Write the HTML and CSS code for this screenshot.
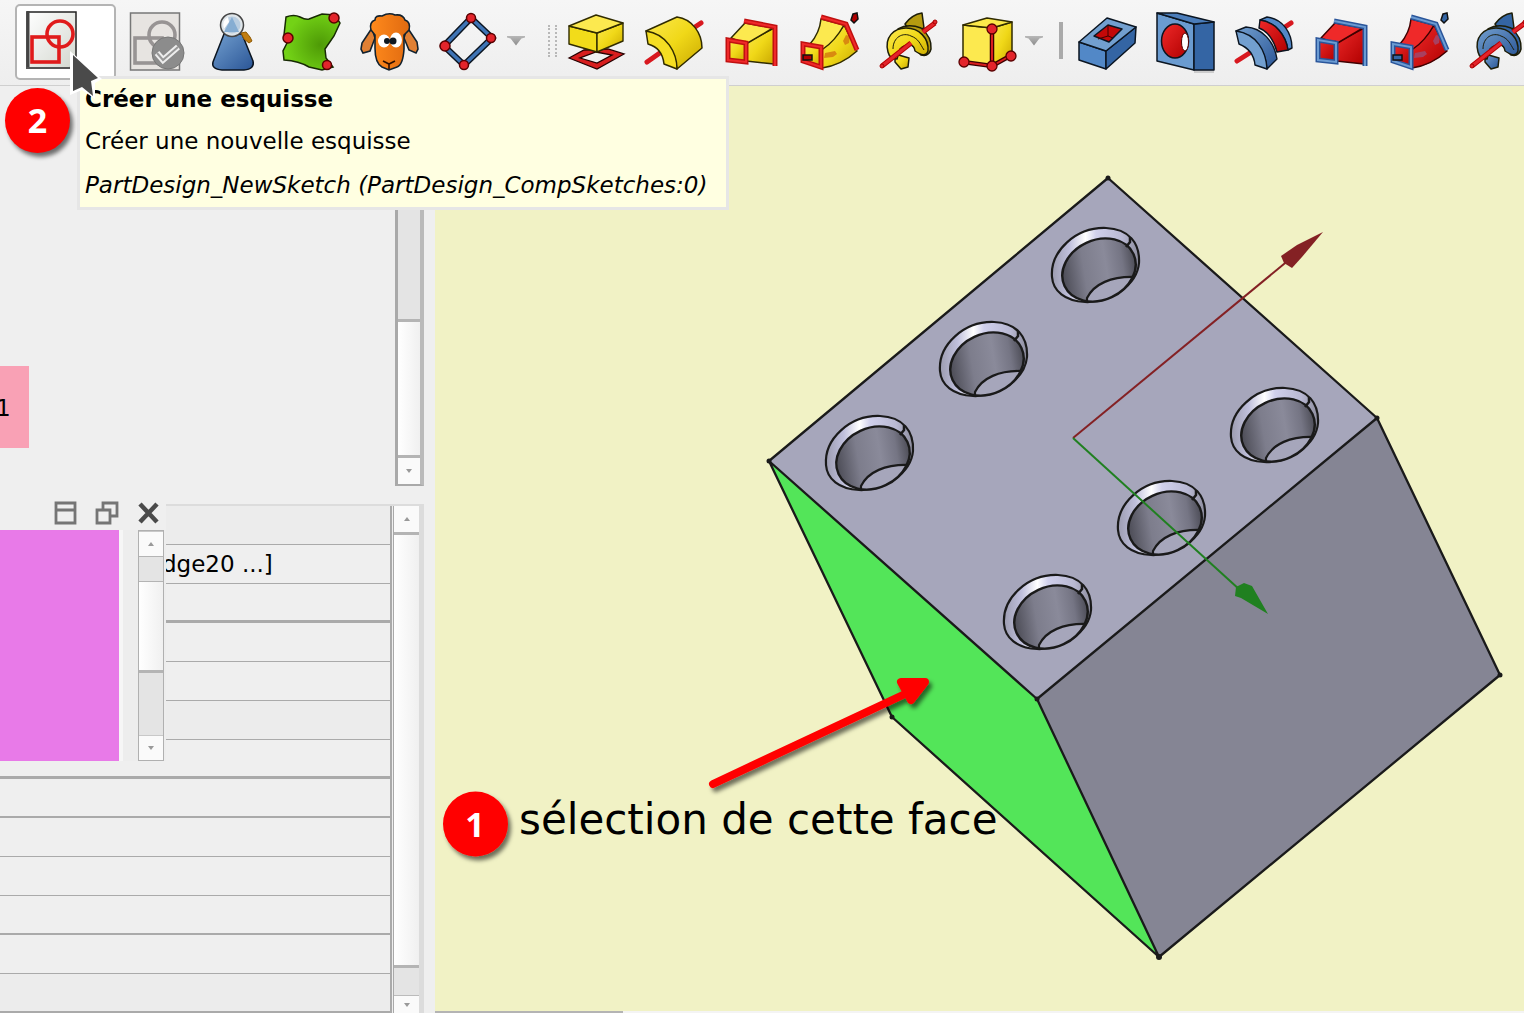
FILE: index.html
```html
<!DOCTYPE html>
<html lang="fr">
<head>
<meta charset="utf-8">
<title>PartDesign</title>
<link rel="stylesheet" href="styles.css">
</head>
<body>
<svg class="defs" aria-hidden="true">
  <defs>
    <linearGradient id="yellow" x1="0" y1="0" x2="1" y2="1"><stop offset="0" stop-color="#fce94f"/><stop offset=".5" stop-color="#f0d818"/><stop offset="1" stop-color="#c9a800"/></linearGradient>
    <linearGradient id="blue" x1="0" y1="0" x2="1" y2="1"><stop offset="0" stop-color="#729fcf"/><stop offset="1" stop-color="#2a5596"/></linearGradient>
    <linearGradient id="red" x1="0" y1="0" x2="1" y2="1"><stop offset="0" stop-color="#ef2929"/><stop offset="1" stop-color="#b00000"/></linearGradient>
    <linearGradient id="paper" x1="0" y1="0" x2="1" y2="1"><stop offset="0" stop-color="#fff"/><stop offset="1" stop-color="#d3d7cf"/></linearGradient>
    <radialGradient id="green" cx=".65" cy=".55" r=".6"><stop offset="0" stop-color="#4e9a06"/><stop offset="1" stop-color="#73d216"/></radialGradient>
    <linearGradient id="orange"><stop offset="0" stop-color="#ff8a1c"/><stop offset="1" stop-color="#e06a10"/></linearGradient>
    <symbol id="loft" viewBox="0 0 60 60">
      <path class="side" d="M24 32 52 17V53L24 50Z"/>
      <path class="top" d="M9 27 23 12 51 17 24 33Z"/>
      <path class="frame-out" d="M22 10 53 16V55"/><path class="frame-in" d="M22 10 53 16V55"/>
      <rect class="side flat" x="6" y="29" width="18" height="21"/>
      <path class="frame-out" d="M6 29 24 32V51L6 49Z"/><path class="frame-in" d="M6 29 24 32V51L6 49Z"/>
    </symbol>
    <symbol id="pipe" viewBox="0 0 60 60">
      <path class="side" d="M22 37C32 30 39 22 44 14L57 40C46 50 36 55 22 57Z"/>
      <path class="blob" d="M43 30l3-6 4 1-1 7-4 2ZM25 42l10-2 2 3-4 3-9 1Z"/>
      <path class="top" d="M10 33C17 25 20 18 21 8L44 14C39 23 32 32 23 38Z"/>
      <path class="frame-out" d="M21 6 46 13 57 39"/><path class="frame-in" d="M21 6 46 13 57 39"/>
      <path class="side flat" d="M3 34 21 37V56L3 50Z"/>
      <path class="frame-out" d="M3 33 21 36V56L3 50Z"/><path class="frame-in" d="M3 33 21 36V56L3 50Z"/>
      <path class="dot" d="M3 44H12V49H3ZM53 3l4-1 1 6-4 4-3-3Z"/>
    </symbol>
    <symbol id="helix" viewBox="0 0 60 60">
      <path class="body dark" d="M27 13C32 6 38 3 44 2L46 17 33 22Z"/>
      <path class="body" d="M17 43 31 47 30 56 23 58 17 51Z"/>
      <path class="body dark" d="M20 18Q30 12 43 17 54 26 53 38 51 46 43 44Z"/>
      <path class="body" d="M10 41C6 26 16 17 28 17C41 17 51 27 50 40C48 46 43 44 37 40C36 32 28 32 22 38L19 48C13 48 11 45 10 41Z"/>
      <path class="line" d="M15 38C15 26 25 21 33 25C41 28 42 33 46 39"/>
      <path class="axis-out" d="M4 55 33 32M45 21 57 12"/><path class="axis" d="M4 55 33 32M45 21 57 12"/>
      <circle class="axis-dot" cx="4" cy="55" r="2"/><circle class="axis-dot" cx="57" cy="11" r="2"/>
    </symbol>
  </defs>
</svg>

<header class="toolbar" role="toolbar">
  <button class="tool tool-active" aria-label="Créer une esquisse">
    <svg class="icon" viewBox="0 0 60 60"><rect x="5" y="2" width="49" height="56" fill="url(#paper)" stroke="#222" stroke-width="1.5"/><path d="M6 1V59" stroke="#444" stroke-width="3"/><path d="M4 58H48L54 52" stroke="#555" stroke-width="2" fill="none"/><g fill="none" stroke="#e01b1b" stroke-width="3.6"><rect x="10" y="27" width="27" height="25"/><circle cx="38" cy="24" r="13"/></g></svg>
  </button>
  <div class="group">
    <button class="tool" aria-label="Valider l'esquisse" disabled><svg class="icon" viewBox="0 0 60 60"><rect x="4.500" y="2" width="49" height="57" fill="#e7e4e1" stroke="#777" stroke-width="1.5"/><g fill="none" stroke="#989494" stroke-width="3.600"><rect x="9" y="27" width="27" height="25"/><circle cx="36" cy="24" r="13"/></g><circle cx="42" cy="42" r="16" fill="#8c8c8c" stroke="#777"/><path d="m31 42 6 7L52 36" fill="none" stroke="#eee" stroke-width="6"/><path d="m31 42 6 7L52 36" fill="none" stroke="#999" stroke-width="2"/></svg></button>
    <button class="tool" aria-label="Vérifier la géométrie"><svg class="icon" viewBox="0 0 60 60"><path d="M20 23 9 51Q7 58 18 59H40Q51 58 49 50L38 23Z" fill="url(#blue)" stroke="#0b1521" stroke-width="1.500"/><path d="m37 22 3 6 5 4 3-2-2-4-4-5Z" fill="#c17d11" stroke="#8f5902"/><circle cx="28" cy="14" r="11.500" fill="#dfe5e9" stroke="#444" stroke-width="1.500"/><circle cx="28" cy="14" r="8.500" fill="#b9cde0"/><path d="M28 6 35 21H20Z" fill="#86add2"/><path d="M20 18Q17 10 24 6L25 11Z" fill="#fff"/></svg></button>
    <button class="tool" aria-label="SubShapeBinder"><svg class="icon" viewBox="0 0 60 60"><path d="M4 6Q12 3 18 6T27 8L40 3 53 4 58 12 52 25 43 38 44 47 51 56 40 59 27 56Q17 50 2 49L1 40 5 32 2 24Z" fill="url(#green)" stroke="#172a04" stroke-width="1.500"/><g fill="#e3242b" stroke="#5a0000" stroke-width="1.500"><circle cx="52" cy="7" r="5"/><circle cx="6" cy="27" r="5"/><circle cx="45" cy="54" r="4.500"/></g></svg></button>
    <button class="tool" aria-label="Clone"><svg class="icon" viewBox="0 0 60 60"><path d="M12 17 2 32 1 38 3 42 10 40 15 27ZM47 16 57 31 58 38 56 42 49 39 44 27Z" fill="#e08034" stroke="#12222f" stroke-width="1.600"/><path d="M11 19Q9 11 15 9 15 4 22 5 29 1 35 4 43 3 45 9 51 11 49 19L44 24V38Q43 54 37 56L29 59 22 56Q15 52 15 37V24Z" fill="url(#orange)" stroke="#12222f" stroke-width="1.600"/><ellipse cx="24" cy="30" rx="6" ry="6.500" fill="#fff"/><ellipse cx="36" cy="29" rx="6" ry="7.500" fill="#fff"/><ellipse cx="27" cy="30" rx="3" ry="3" fill="#101820"/><ellipse cx="33" cy="30" rx="3.500" ry="3.500" fill="#101820"/><path d="m23 50 6 3 6-3M29 53v5" fill="none" stroke="#301000" stroke-width="1.600"/></svg></button>
    <button class="tool" aria-label="Polygone"><svg class="icon" viewBox="0 0 60 60"><path d="M33 7 54 27 26 54 6 35Z" fill="none" stroke="#0b1521" stroke-width="6.500"/><path d="M33 7 54 27 26 54 6 35Z" fill="none" stroke="#3f74b5" stroke-width="3.600"/><g fill="#e3242b" stroke="#5a0000" stroke-width="1.500"><circle cx="33" cy="7" r="4.500"/><circle cx="53" cy="27" r="4.500"/><circle cx="7" cy="35" r="5"/><circle cx="26" cy="54" r="4.500"/></g></svg></button>
  </div>
  <button class="drop" aria-label="Plus d'outils"></button>
  <span class="handle"></span>
  <div class="group">
    <button class="tool" aria-label="Protrusion"><svg class="icon" viewBox="0 0 60 60"><path d="M3 47 18 39 42 38 58 43 31 58Z M14 47 31 52 46 44 30 41Z" fill="#d81e1e" fill-rule="evenodd" stroke="#280000" stroke-width="1.300"/><g stroke="#302b00" stroke-width="1.400" stroke-linejoin="round"><path d="M3 15 31 22V41L3 33Z" fill="#f2dc1a"/><path d="M31 22 57 12V30L31 41Z" fill="url(#yellow)"/><path d="M3 15 30 4 57 12 31 22Z" fill="#fce94f"/></g></svg></button>
    <button class="tool" aria-label="Révolution"><svg class="icon" viewBox="0 0 60 60"><path d="M3 51 30 32M45 20 57 12" stroke="#d8181f" stroke-width="5" stroke-linecap="round"/><g stroke="#302b00" stroke-width="1.500" stroke-linejoin="round"><path d="M2 20 33 6C48 8 58 22 58 37L33 58C31 42 23 27 2 20Z" fill="url(#yellow)"/><path d="M2 20C23 23 33 42 33 58L20 53C19 43 15 36 4 33Z" fill="#f5de22"/></g></svg></button>
    <button class="tool additive" aria-label="Lissage additif"><svg class="icon"><use href="#loft"/></svg></button>
    <button class="tool additive" aria-label="Balayage additif"><svg class="icon"><use href="#pipe"/></svg></button>
    <button class="tool additive" aria-label="Hélice additive"><svg class="icon"><use href="#helix"/></svg></button>
    <button class="tool" aria-label="Primitive additive"><svg class="icon" viewBox="0 0 60 60"><g stroke="#302b00" stroke-width="1.500" stroke-linejoin="round"><path d="M7 14 36 17V55L7 50Z" fill="#fce94f"/><path d="M36 17 56 11V45L36 55Z" fill="url(#yellow)"/><path d="M7 14 31 7 56 11 36 17Z" fill="#fbe84a"/></g><path d="M36 18V55M7 51 36 55 54 45" fill="none" stroke="#3a0000" stroke-width="4.500"/><path d="M36 18V55M7 51 36 55 54 45" fill="none" stroke="#d81e1e" stroke-width="2"/><g fill="#e3242b" stroke="#5a0000" stroke-width="1.300"><circle cx="36" cy="18" r="5"/><circle cx="8" cy="51" r="5"/><circle cx="36" cy="55" r="5"/><circle cx="55" cy="45" r="5"/></g></svg></button>
  </div>
  <button class="drop" aria-label="Plus de primitives"></button>
  <span class="separator"></span>
  <div class="group">
    <button class="tool" aria-label="Cavité"><svg class="icon" viewBox="0 0 60 60"><g stroke="#0b1521" stroke-width="1.500" stroke-linejoin="round"><path d="M1 31 28 40V58L1 49Z" fill="#5288c7"/><path d="M28 40 58 16 57 32 28 58Z" fill="#3465a4"/><path d="M1 31 29 7 58 16 28 40Z" fill="#729fcf"/><path d="M16 25 30 14 44 18 31 31Z" fill="#c40808"/></g><path d="M30 14V25L20 28M30 25 35 27" stroke="#400000" fill="none"/></svg></button>
    <button class="tool" aria-label="Perçage"><svg class="icon" viewBox="0 0 60 60"><path d="M38 59H58V62H38Z" fill="#ccc"/><g stroke="#0b1521" stroke-width="1.500" stroke-linejoin="round"><path d="M1 2 38 13V59L1 50Z" fill="#6a9bd0"/><path d="M38 13 58 11V59H38Z" fill="#3465a4"/><path d="M1 2H21L58 11 38 13Z" fill="#4b7dba"/><ellipse cx="19" cy="30" rx="13.500" ry="17" fill="url(#red)"/></g><ellipse cx="29" cy="31" rx="3.500" ry="9" fill="#fff" stroke="#500"/></svg></button>
    <button class="tool" aria-label="Rainure"><svg class="icon" viewBox="0 0 60 60"><path d="M3 50 25 36M48 18 57 12" stroke="#d8181f" stroke-width="5" stroke-linecap="round"/><g stroke="#0b1521" stroke-width="1.400" stroke-linejoin="round"><path d="M26 9 33 6C49 8 58 22 58 37L54 39C52 25 42 11 26 9Z" fill="#5288c7"/><path d="M26 9C42 11 52 25 54 39L43 41C40 30 35 21 25 17Z" fill="url(#red)"/><path d="M2 20 12 16C28 17 40 30 43 48L33 58C32 42 23 25 2 20Z" fill="url(#blue)"/><path d="M2 20C23 23 32 40 33 58L21 54C20 43 15 37 5 33Z" fill="#729fcf"/></g></svg></button>
    <button class="tool subtractive" aria-label="Lissage soustractif"><svg class="icon"><use href="#loft"/></svg></button>
    <button class="tool subtractive" aria-label="Balayage soustractif"><svg class="icon"><use href="#pipe"/></svg></button>
    <button class="tool subtractive" aria-label="Hélice soustractive"><svg class="icon"><use href="#helix"/></svg></button>
  </div>
</header>

<main class="workspace">
  <aside class="side-panel">
    <section class="tree">
      <div class="tree-body"><div class="tree-item">1</div></div>
      <div class="scroll scroll-tree">
        <span class="track grow"></span><span class="thumb tree-thumb"></span><span class="step down"></span>
      </div>
    </section>
    <section class="properties">
      <table class="rows">
        <tbody>
          <tr class="alt"><td></td></tr>
          <tr><td>dge20 ...]</td></tr>
          <tr class="thick"><td></td></tr>
          <tr><td></td></tr>
          <tr><td></td></tr>
          <tr class="alt"><td></td></tr>
          <tr class="thick"><td></td></tr>
          <tr class="medium"><td></td></tr>
          <tr><td></td></tr>
          <tr><td></td></tr>
          <tr class="medium"><td></td></tr>
          <tr><td></td></tr>
          <tr class="alt medium"><td></td></tr>
        </tbody>
      </table>
      <div class="scroll scroll-rows">
        <span class="step up"></span><span class="thumb grow"></span><span class="track rows-track"></span><span class="step down short"></span>
      </div>
      <div class="dock">
        <div class="dock-title">
          <button class="dock-button" aria-label="Réduire"><svg viewBox="0 0 24 24"><path d="M2 2H21V22H2ZM2 9H21" fill="none" stroke="#757575" stroke-width="2.800"/></svg></button>
          <button class="dock-button" aria-label="Détacher"><svg viewBox="0 0 24 24"><path d="M8 8V2H22V15H16M2 9H15V22H2Z" fill="none" stroke="#757575" stroke-width="2.800"/></svg></button>
          <button class="dock-button" aria-label="Fermer"><svg viewBox="0 0 24 24"><path d="M4 3 21 21M21 3 4 21" stroke="#4a4a4a" stroke-width="4.500"/></svg></button>
        </div>
        <div class="dock-body">
          <div class="swatch"></div>
          <div class="scroll scroll-dock">
            <span class="step up"></span><span class="track dock-track"></span><span class="thumb grow"></span><span class="track dock-track-end"></span><span class="step down"></span>
          </div>
        </div>
      </div>
    </section>
  </aside>

  <section class="view">
    <svg class="scene" viewBox="435 86 1089 925" preserveAspectRatio="xMidYMid slice">
      <defs>
        <linearGradient id="rim" gradientUnits="userSpaceOnUse" x1="-44" y1="0" x2="44" y2="0"><stop offset="0" stop-color="#9c9cb0"/><stop offset=".2" stop-color="#c0c0dc"/><stop offset=".38" stop-color="#fff"/><stop offset=".5" stop-color="#d0d0ec"/><stop offset=".8" stop-color="#b8b8d2"/><stop offset="1" stop-color="#8a8a9a"/></linearGradient>
        <linearGradient id="bore" gradientUnits="userSpaceOnUse" x1="-34" y1="10" x2="40" y2="-2"><stop offset="0" stop-color="#4c4c56"/><stop offset=".3" stop-color="#7d7d8c"/><stop offset=".6" stop-color="#8a8a9a"/><stop offset=".82" stop-color="#757584"/><stop offset="1" stop-color="#4c4c56"/></linearGradient>
        <clipPath id="bore-clip"><ellipse cx="3" cy="5" rx="38" ry="30" transform="rotate(-25 3 5)"/></clipPath>
        <filter id="shadow" x="-20%" y="-20%" width="150%" height="150%"><feDropShadow dx="3" dy="4" stdDeviation="2" flood-color="#000" flood-opacity=".55"/></filter>
        <g id="hole">
          <path d="M-44 12C-46-14-20-38 10-37 33-36 44-22 43-2 41 20 15 38-11 37-31 36-43 26-44 12Z" fill="url(#rim)" stroke="#1a1a1a" stroke-width="2.200"/>
          <g clip-path="url(#bore-clip)"><rect x="-36" y="-30" width="78" height="70" fill="url(#bore)"/><path d="M-9 33C-2 19 15 11 40 12V45H-9Z" fill="#a6a6bb" stroke="#1a1a1a" stroke-width="2.200"/></g>
          <ellipse cx="3" cy="5" rx="38" ry="30" transform="rotate(-25 3 5)" fill="none" stroke="#1a1a1a" stroke-width="2.400"/>
          <path d="M34-28V-23L30-18" fill="none" stroke="#1a1a1a" stroke-width="2.500"/>
        </g>
      </defs>
      <path d="M1108 178 1377 418 1037 699 769 461Z" fill="#a6a6bb"/>
      <path d="M1377 418 1500 675 1159 957 1037 699Z" fill="#858594"/>
      <path d="M769 461 1037 699 1159 957 892 717Z" fill="#53e559"/>
      <path d="M1108 178 1377 418 1037 699 769 461ZM1377 418 1500 675 1159 957 1037 699M769 461 892 717 1159 957" fill="none" stroke="#1a1a1a" stroke-width="2.300" stroke-linejoin="round"/>
      <g fill="#1a1a1a"><circle cx="1108" cy="178" r="2.500"/><circle cx="1377" cy="418" r="2.500"/><circle cx="1037" cy="699" r="2.500"/><circle cx="769" cy="461" r="2.500"/><circle cx="892" cy="717" r="2.500"/><circle cx="1159" cy="957" r="3"/><circle cx="1500" cy="675" r="2.500"/></g>
      <use href="#hole" x="1096" y="265"/><use href="#hole" x="984" y="359"/><use href="#hole" x="870" y="453"/>
      <use href="#hole" x="1275" y="425"/><use href="#hole" x="1162" y="518"/><use href="#hole" x="1048" y="612"/>
      <path d="M1073 438 1290 259" stroke="#842124" stroke-width="2"/>
      <path d="M1323 232 1297 245 1281 256 1284 263 1292 268 1302 257Z" fill="#842124"/>
      <path d="M1073 438 1240 590" stroke="#208020" stroke-width="2"/>
      <path d="M1268 614 1252 586 1244 583 1236 587 1235 596 1241 598Z" fill="#208020"/>
      <g filter="url(#shadow)"><path d="M713 784 905 694" stroke="red" stroke-width="8" stroke-linecap="round"/><path d="M901 682 925 682 911 700Z" fill="red" stroke="red" stroke-width="8" stroke-linejoin="round"/></g>
      <circle cx="475.500" cy="824" r="32.500" fill="red" filter="url(#shadow)"/>
      <text class="badge-text" x="475" y="837">1</text>
      <text class="note" x="519" y="834">sélection de cette face</text>
    </svg>
    <div class="view-edge"><span></span></div>
  </section>
</main>

<div class="tooltip" role="tooltip">
  <p class="tip-title">Créer une esquisse</p>
  <p>Créer une nouvelle esquisse</p>
  <p class="tip-command">PartDesign_NewSketch (PartDesign_CompSketches:0)</p>
</div>
<svg class="cursor" viewBox="0 0 32 48"><path d="M0 0 32 28 25 32 25 48 12 39 0 44Z" fill="#fff"/><path d="M3 4 28 27 21 30 23 45 12 36 3 40Z" fill="#4a4a4a"/></svg>
<span class="badge">2</span>
</body>
</html>
```

FILE: styles.css
```css
* { box-sizing: border-box; }

body {
  margin: 0;
  min-height: 100vh;
  display: flex;
  flex-direction: column;
  overflow: hidden;
  background: #efefef;
  color: #000;
  font-family: "DejaVu Sans", sans-serif;
  font-size: 23px;
}

button { margin: 0; padding: 0; border: 0; background: none; }

.defs { position: absolute; width: 0; height: 0; }

/* Toolbar */
.toolbar {
  display: flex;
  align-items: center;
  height: 86px;
  padding: 0 0 4px 15px;
  overflow: hidden;
  background: linear-gradient(#f6f6f6, #eeeeee);
  border-bottom: 1px solid #cfcfcf;
}
.toolbar > * { flex: none; }
.group { display: flex; flex: none; }
.tool { flex: none; width: 78px; height: 76px; display: grid; place-items: center; }
.tool-active {
  width: 101px;
  margin: 3px 1px 0 0;
  justify-content: start;
  padding: 0 0 4px 5px;
  background: #fff;
  border: 2px solid #b4b4b4;
  border-radius: 5px;
}
.icon { display: block; width: 60px; height: 60px; overflow: visible; }
.drop { width: 18px; height: 40px; display: grid; place-items: center; }
.drop::before {
  content: "";
  width: 18px;
  height: 10px;
  background: linear-gradient(#b8b8b8, #8a8a8a);
  clip-path: polygon(0 0, 100% 0, 100% 20%, 80% 30%, 50% 100%, 20% 30%, 0 20%);
}
.handle {
  width: 9px;
  height: 32px;
  margin: 0 0 0 23px;
  border: 2px dotted #b8b8b8;
  border-width: 0 2px;
}
.separator { width: 4px; height: 37px; margin: 0 6px 0 16px; background: #aaa; }

/* Paint sets shared by the loft, pipe and helix icons */
.additive { --top: #fce94f; --side: url(#yellow); --ink: #302b00; --out: #c01010; --in: #ef2929; --blob: #d98a10; --dot: #b00000; --body: url(#yellow); --dark: #b59b10; }
.subtractive { --top: #ef2929; --side: url(#red); --ink: #400000; --out: #2a559a; --in: #6b9bd2; --blob: #a84060; --dot: #3465a4; --body: url(#blue); --dark: #3465a4; }
.top { fill: var(--top); stroke: var(--ink); stroke-width: 1.5px; stroke-linejoin: round; }
.side { fill: var(--side); stroke: var(--ink); stroke-width: 1.5px; stroke-linejoin: round; }
.flat { stroke: none; }
.frame-out { fill: none; stroke: var(--out); stroke-width: 5px; }
.frame-in { fill: none; stroke: var(--in); stroke-width: 2px; }
.blob { fill: var(--blob); }
.dot { fill: var(--dot); stroke: #101010; stroke-width: 1.5px; }
.body { fill: var(--body); stroke: #1d1d08; stroke-width: 1.5px; stroke-linejoin: round; }
.dark { fill: var(--dark); }
.line { fill: none; stroke: #1d1d08; stroke-width: 1px; }
.axis-out { fill: none; stroke: #b80000; stroke-width: 5px; }
.axis { fill: none; stroke: #e3242b; stroke-width: 3px; }
.axis-dot { fill: #e3242b; stroke: #a40000; }

/* Workspace */
.workspace { flex: 1; display: grid; grid-template-columns: 435px 1fr; min-height: 0; }
.side-panel { display: flex; flex-direction: column; gap: 18px; padding-right: 11px; }

.tree { display: flex; height: 400px; }
.tree-body { flex: 1; padding-top: 280px; }
.tree-item { width: 29px; height: 82px; line-height: 84px; background: #f9a1b5; text-indent: -4px; }

.properties { position: relative; flex: 1; display: flex; border-top: 2px solid #dcdcdc; }
.rows { flex: 1; height: 507px; border-spacing: 0; border-right: 2px solid #aaa; }
.rows td { height: 39px; padding: 0 0 0 162px; border-bottom: 1px solid #aaa; line-height: 38px; white-space: nowrap; }
.rows .alt td { background: #ececec; }
.rows .thick td { border-bottom-width: 3px; }
.rows .medium td { border-bottom-width: 2px; }

/* Scroll bars */
.scroll { display: flex; flex-direction: column; flex: none; }
.track { background: #e4e4e4; }
.thumb { background: linear-gradient(90deg, #fff, #f0f0f0); border: 3px solid #b4b4b4; border-width: 3px 0; }
.grow { flex: 1; }
.step { display: grid; place-items: center; height: 26px; background: #fafafa; }
.step::before { content: ""; border: 3px solid transparent; }
.up::before { border-bottom: 4px solid #999; border-top: 0; }
.down::before { border-top: 4px solid #999; border-bottom: 0; }

.scroll-tree { width: 29px; border: 3px solid #a9a9a9; border-width: 0 4px 2px 3px; border-right-color: #bababa; }
.tree-thumb { height: 139px; }
.scroll-rows { width: 31px; border-left: 1px solid #a9a9a9; border-right: 5px solid #dcdcdc; margin-left: 1px; }
.rows-track { height: 27px; }
.short { height: 18px; border-top: 1px solid #bbb; }

/* Floating dock over the property rows */
.dock { position: absolute; left: 0; top: -16px; width: 166px; background: #efefef; }
.dock-title { display: flex; justify-content: flex-end; align-items: center; gap: 17px; height: 40px; padding: 6px 6px 0 0; }
.dock-button { width: 24px; height: 24px; }
.dock-button svg { display: block; width: 24px; height: 24px; }
.dock-body { display: flex; justify-content: space-between; height: 231px; padding-right: 2px; background: #ededed; }
.swatch { width: 123px; background: #e87ae8; border-right: 4px solid #f6f6f6; }
.scroll-dock { width: 26px; border: 1px solid #b0b0b0; }
.scroll-dock .step { height: 25px; border-top: 1px solid #c8c8c8; }
.scroll-dock .thumb { border-top-width: 1px; }
.dock-track { height: 25px; border-top: 1px solid #b4b4b4; }
.dock-track-end { height: 62px; }

/* 3D view */
.view { display: flex; flex-direction: column; min-width: 0; background: #f1f2c5; }
.scene { display: block; flex: 1; width: 100%; min-height: 0; }
.view-edge { display: flex; height: 2px; background: #f4f4f4; }
.view-edge span { width: 188px; background: #b4b4b4; }
.note { font: 42px "DejaVu Sans", sans-serif; }
.badge-text { font: bold 34px "Open Sans", sans-serif; fill: #fff; text-anchor: middle; }

/* Overlays */
.tooltip {
  position: absolute;
  left: 77px;
  top: 76px;
  min-width: 652px;
  padding: 0 5px;
  border: 3px solid #e6e6e6;
  background: #ffffe1;
  white-space: nowrap;
}
.tooltip p { margin: 0; line-height: 44px; }
.tooltip .tip-title { font-weight: bold; line-height: 40px; }
.cursor { position: absolute; left: 70px; top: 51px; width: 32px; height: 48px; }
.badge {
  position: absolute;
  left: 5px;
  top: 88px;
  width: 65px;
  height: 65px;
  border-radius: 50%;
  background: #f00;
  box-shadow: 3px 4px 4px rgba(0, 0, 0, .55);
  color: #fff;
  font: bold 34px/65px "Open Sans", sans-serif;
  text-align: center;
}
.tip-command { font-style: italic; }
```
